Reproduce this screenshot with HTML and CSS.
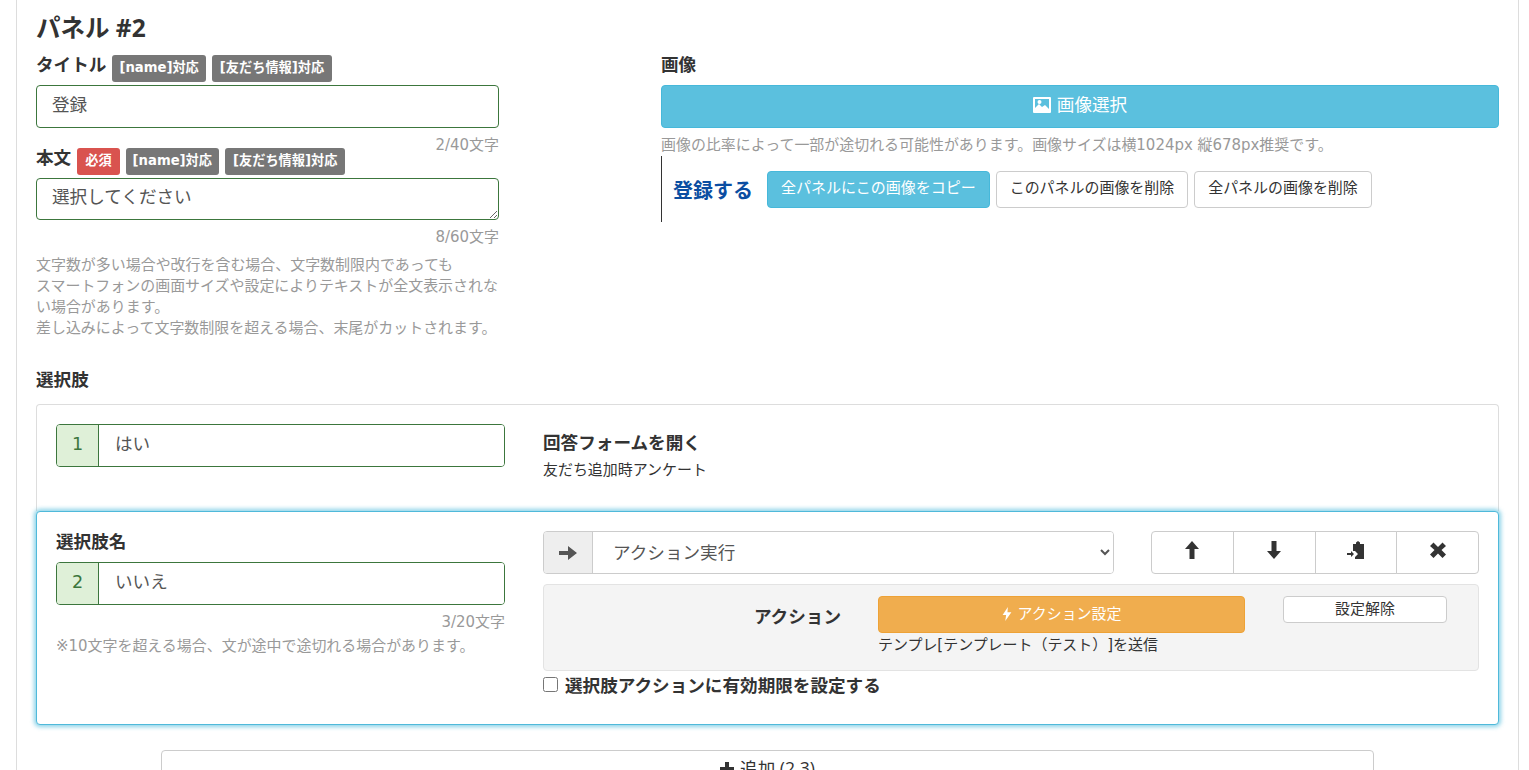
FILE: index.html
```html
<!DOCTYPE html>
<html lang="ja">
<head>
<meta charset="utf-8">
<title>パネル #2</title>
<link rel="stylesheet" href="styles.css">
</head>
<body>
<div class="wrap">
  <h3 class="panel-title">パネル #2</h3>
  <div class="cols">
    <div class="col-left">
      <div class="label-row"><span class="label-text">タイトル</span><span class="badge">[name]対応</span><span class="badge badge-wide">[友だち情報]対応</span></div>
      <input class="text-input" type="text" value="登録">
      <div class="counter">2/40文字</div>
      <div class="label-row"><span class="label-text">本文</span><span class="badge badge-red">必須</span><span class="badge">[name]対応</span><span class="badge badge-wide">[友だち情報]対応</span></div>
      <textarea class="text-area">選択してください</textarea>
      <div class="counter">8/60文字</div>
      <p class="help help-main">文字数が多い場合や改行を含む場合、文字数制限内であっても<br>スマートフォンの画面サイズや設定によりテキストが全文表示されない場合があります。<br>差し込みによって文字数制限を超える場合、末尾がカットされます。</p>
    </div>
    <div class="col-right">
      <div class="label-row"><span class="label-text">画像</span></div>
      <button class="btn btn-info btn-wide"><svg class="ico-pic" viewBox="0 0 18 16"><path fill="#fff" fill-rule="evenodd" d="M1 0h16a1 1 0 0 1 1 1v14a1 1 0 0 1-1 1H1a1 1 0 0 1-1-1V1a1 1 0 0 1 1-1zm1 2v9l4-4 3 3 3-2 4 4V2H2zm4.500 1a2 2 0 1 1 0 4 2 2 0 0 1 0-4z"/></svg>画像選択</button>
      <p class="help help-image">画像の比率によって一部が途切れる可能性があります。画像サイズは横1024px 縦678px推奨です。</p>
      <div class="image-row">
        <span class="image-alt">登録する</span>
        <button class="btn btn-info btn-sm-row btn-copy">全パネルにこの画像をコピー</button>
        <button class="btn btn-default btn-sm-row">このパネルの画像を削除</button>
        <button class="btn btn-default btn-sm-row">全パネルの画像を削除</button>
      </div>
    </div>
  </div>
  <div class="section-label">選択肢</div>
  <div class="choice choice-first">
    <div class="choice-left">
      <div class="input-group"><span class="addon">1</span><input class="group-input" type="text" value="はい"></div>
    </div>
    <div class="choice-right">
      <div class="form-title">回答フォームを開く</div>
      <div class="form-name">友だち追加時アンケート</div>
    </div>
  </div>
  <div class="choice choice-active">
    <div class="choice-left">
      <div class="field-label">選択肢名</div>
      <div class="input-group"><span class="addon">2</span><input class="group-input" type="text" value="いいえ"></div>
      <div class="counter">3/20文字</div>
      <p class="help help-note">※10文字を超える場合、文が途中で途切れる場合があります。</p>
    </div>
    <div class="choice-right">
      <div class="toolbar">
        <div class="select-group">
          <span class="select-addon"><svg class="ico" viewBox="0 0 18 14"><path fill="#555" d="M0 5h9V0l9 7-9 7V9H0z"/></svg></span>
          <select class="select"><option>アクション実行</option></select>
        </div>
        <div class="btn-group">
          <button class="icon-btn"><svg class="ico" viewBox="0 0 18 18"><path fill="#333" d="M9 0l7 8h-4.500v10h-5V8H2z"/></svg></button>
          <button class="icon-btn"><svg class="ico" viewBox="0 0 18 18"><path fill="#333" d="M9 18l-7-8h4.500V0h5v10H16z"/></svg></button>
          <button class="icon-btn"><svg class="ico" viewBox="0 0 18 18"><path fill="#333" d="M6 3h3V1.500L11 0l2 1.500V3h4v15H8v-2l3-3-3-3H6zM0 12h4v-2l3 3-3 3v-2H0z"/></svg></button>
          <button class="icon-btn"><svg class="ico" viewBox="0 0 18 18"><path fill="#333" d="M4.500 1.500L9 6l4.500-4.500L17 5l-4.500 4 4.500 4.500L13.500 17 9 12.500 4.500 17 1 13.500 5.500 9 1 5z"/></svg></button>
        </div>
      </div>
      <div class="action-box">
        <div class="action-label">アクション</div>
        <div class="action-main">
          <button class="btn btn-warning"><svg class="ico-bolt" viewBox="0 0 10 16"><path fill="#fff" d="M6 0L0 9h4l-1 7 7-10H5.500z"/></svg>アクション設定</button>
          <div class="action-desc">テンプレ[テンプレート（テスト）]を送信</div>
        </div>
        <button class="btn btn-default btn-clear">設定解除</button>
      </div>
      <label class="check-row"><input class="check" type="checkbox"><span>選択肢アクションに有効期限を設定する</span></label>
    </div>
  </div>
  <button class="btn btn-default btn-add"><svg class="ico-plus" viewBox="0 0 14 14"><path fill="#333" d="M5 0h4v5h5v4H9v5H5V9H0V5h5z"/></svg>追加 (2,3)</button>
</div>
</body>
</html>
```
FILE: styles.css
```css
* { box-sizing: border-box; }
html, body { margin: 0; height: 770px; overflow: hidden; background: #fff; }
body { font-family: "DejaVu Sans", "Noto Sans CJK JP", sans-serif; font-size: 17.6px; color: #333; text-spacing-trim: space-all; }
.wrap { margin-left: 16px; width: 1503px; height: 770px; padding: 11px 19px 0; border-left: 1px solid #ddd; border-right: 1px solid #ddd; }
.panel-title { margin: 0 0 10px; font-family: "Open Sans", "Noto Sans CJK JP", sans-serif; font-size: 24.500px; line-height: 34px; font-weight: 700; }
.cols { display: flex; gap: 162px; }
.col-left { width: 463px; flex: none; }
.col-right { flex: 1; }
.label-row { display: flex; align-items: flex-start; gap: 6px; height: 27px; margin-bottom: 3px; }
.label-text { font-weight: 700; line-height: 21px; }
.badge { height: 27px; padding: 0 7px 2px; border-radius: 3px; background: #777; color: #fff; font-size: 13.200px; font-weight: 700; line-height: 25px; white-space: nowrap; }
.badge-wide { padding: 0 8px 2px; }
.badge-red { padding: 0 8px 2px; background: #d9534f; }
.text-input, .text-area { display: block; width: 100%; border: 1px solid #3c763d; border-radius: 4px; padding: 0 15px; font: inherit; color: #555; background: #fff; outline: 0; }
.text-input { height: 43px; padding-bottom: 6px; }
.text-area { height: 42px; padding-top: 6px; line-height: 25px; resize: vertical; }
.counter { height: 20px; padding-top: 10px; font-size: 14.960px; line-height: 14px; color: #999; text-align: right; }
.help { margin: 0; font-size: 14.960px; line-height: 21px; color: #999; }
.help-main { margin: 15px -2px 0 0; }
.help-image { margin-top: 7px; line-height: 20px; }
.help-note { margin-top: 11px; }
.btn { display: block; border: 1px solid #ccc; border-radius: 4px; background: #fff; color: #333; font: inherit; cursor: pointer; white-space: nowrap; padding: 0; }
.btn-info { background: #5bc0de; border-color: #46b8da; color: #fff; }
.btn-default { background: #fff; border-color: #ccc; }
.btn-warning { width: 100%; height: 37px; padding-bottom: 5px; background: #f0ad4e; border-color: #eea236; color: #fff; font-size: 14.960px; }
.btn-wide { width: 100%; height: 43px; padding-bottom: 6px; }
.ico-pic { width: 18px; height: 16px; margin-right: 6px; vertical-align: -2px; }
.image-row { display: flex; align-items: center; gap: 6px; height: 66px; margin-top: 1px; padding-left: 11px; border-left: 1px solid #333; }
.image-alt { margin: 4px 8px 0 0; font-size: 20px; font-weight: 700; line-height: 28px; color: #0b4ea2; }
.btn-sm-row { height: 37px; padding: 0 13px 5px; font-size: 14.960px; }
.btn-copy { font-size: 15px; }
.section-label { margin-top: 28px; margin-bottom: 10px; font-weight: 700; line-height: 27px; }
.choice { display: grid; grid-template-columns: 449px 1fr; gap: 38px; padding: 19px; background: #fff; }
.choice-left, .choice-right { min-width: 0; }
.choice-first { height: 107px; border: 1px solid #ddd; border-bottom: 0; border-radius: 4px 4px 0 0; }
.choice-active { position: relative; height: 214px; border: 1px solid #4fb9da; border-radius: 4px; box-shadow: 0 0 4px 2px rgba(91, 192, 222, .7); }
.input-group { display: flex; height: 43px; border: 1px solid #3c763d; border-radius: 4px; overflow: hidden; }
.addon { width: 42px; flex: none; background: #dff0d8; border-right: 1px solid #3c763d; color: #3c763d; text-align: center; line-height: 38px; }
.group-input { flex: 1; min-width: 0; border: 0; padding: 0 16px 6px; font: inherit; color: #555; outline: 0; background: #fff; }
.form-title { margin-top: 7px; font-weight: 700; line-height: 24px; }
.form-name { margin-top: 4px; font-size: 14.960px; line-height: 22px; }
.field-label { height: 23px; margin-bottom: 8px; font-weight: 700; line-height: 23px; }
.toolbar { display: flex; justify-content: space-between; height: 43px; margin-bottom: 10px; }
.select-group { display: flex; width: 571px; border: 1px solid #ccc; border-radius: 4px; overflow: hidden; }
.select-addon { display: flex; align-items: center; justify-content: center; width: 49px; flex: none; background: #eee; border-right: 1px solid #ccc; }
.ico { width: 18px; height: 18px; }
.select { flex: 1; min-width: 0; border: 0; padding: 0 16px; font: inherit; color: #555; background: #fff; outline: 0; }
.btn-group { display: flex; width: 328px; }
.icon-btn { display: flex; flex: 1 1 0; align-items: center; justify-content: center; height: 43px; padding: 0 0 6px; margin-left: -1px; border: 1px solid #ccc; background: #fff; }
.icon-btn:first-child { margin-left: 0; border-radius: 4px 0 0 4px; }
.icon-btn:last-child { border-radius: 0 4px 4px 0; }
.action-box { display: grid; grid-template-columns: 334px 367px 164px; height: 87px; padding-top: 11px; background: #f4f4f4; border: 1px solid #e3e3e3; border-radius: 4px; }
.action-label { padding-right: 37px; padding-top: 8px; text-align: right; font-weight: 700; line-height: 26px; }
.ico-bolt { width: 10px; height: 14px; margin-right: 6px; vertical-align: -2px; }
.action-desc { margin-top: 1px; font-size: 14.960px; line-height: 22px; }
.btn-clear { height: 27px; margin-left: 38px; width: 164px; padding-bottom: 4px; font-size: 14.960px; }
.check-row { display: flex; align-items: center; height: 28px; padding-bottom: 2px; font-weight: 700; }
.check { width: 15px; height: 15px; margin: 0 7px 0 0; }
.btn-add { width: 1213px; height: 43px; margin: 25px auto 0; padding-bottom: 9px; font-family: "Open Sans", "Noto Sans CJK JP", sans-serif; }
.ico-plus { width: 14px; height: 14px; margin-right: 6px; vertical-align: -1px; }
```
